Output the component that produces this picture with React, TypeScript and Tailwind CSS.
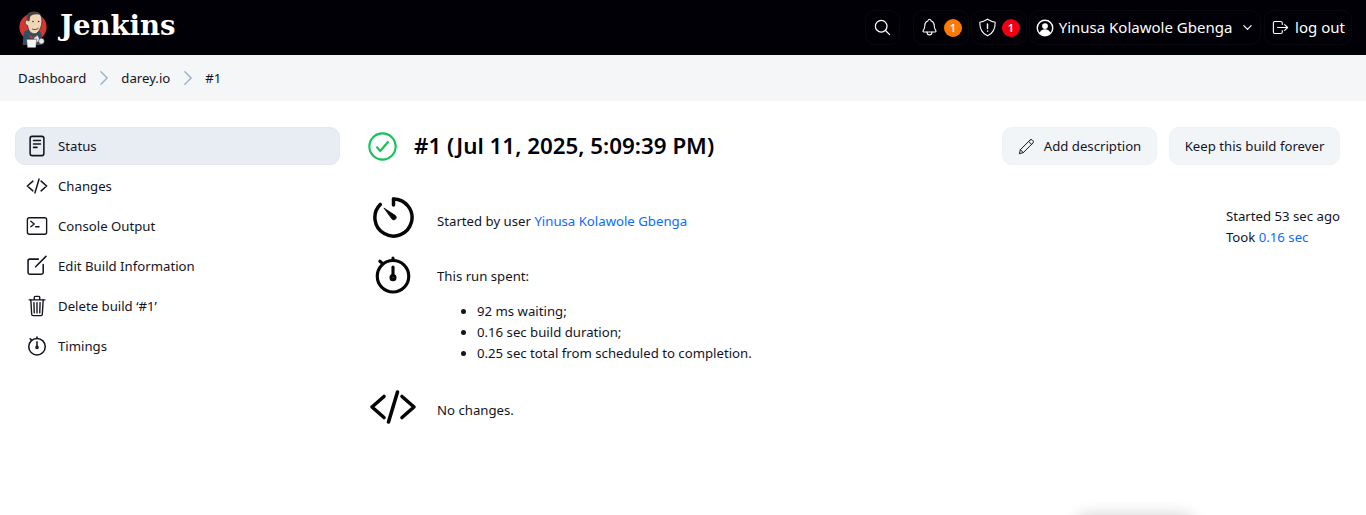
import type { ReactNode } from "react";

const sans = "font-['Noto_Sans','Open_Sans',sans-serif]";

function Icon({ className, children, strokeWidth = 32 }: { className: string; children: ReactNode; strokeWidth?: number }) {
  return (
    <svg viewBox="0 0 512 512" fill="none" stroke="currentColor" strokeWidth={strokeWidth} strokeLinecap="round" strokeLinejoin="round" className={className}>
      {children}
    </svg>
  );
}

const DocIcon = ({ className }: { className: string }) => (
  <Icon className={className} strokeWidth={36}>
    <rect x="96" y="32" width="320" height="448" rx="48" />
    <path d="M176 128h160M176 208h160M176 288h80" />
  </Icon>
);
const CodeIcon = ({ className, strokeWidth = 36 }: { className: string; strokeWidth?: number }) => (
  <Icon className={className} strokeWidth={strokeWidth}>
    <path d="M160 368L32 256l128-112M352 368l128-112-128-112M304 96l-96 320" />
  </Icon>
);
const TerminalIcon = ({ className }: { className: string }) => (
  <Icon className={className} strokeWidth={32}>
    <rect x="32" y="64" width="448" height="384" rx="48" />
    <path d="M112 144l80 64-80 64M224 272h80" />
  </Icon>
);
const EditIcon = ({ className }: { className: string }) => (
  <Icon className={className} strokeWidth={36}>
    <path d="M400 224v184a40 40 0 01-40 40H88a40 40 0 01-40-40V136a40 40 0 0140-40h199" />
    <path d="M224 272L464 32" />
  </Icon>
);
const TrashIcon = ({ className }: { className: string }) => (
  <Icon className={className} strokeWidth={32}>
    <path d="M112 112l20 336c1 18 15 32 32 32h184c18 0 31-14 32-32l20-336" />
    <path d="M72 112h368M192 112V56h0a24 24 0 0124-24h80a24 24 0 0124 24h0v56M256 176v240M184 176l8 240M328 176l-8 240" />
  </Icon>
);
const StopwatchIcon = ({ className, strokeWidth = 36 }: { className: string; strokeWidth?: number }) => (
  <Icon className={className} strokeWidth={strokeWidth}>
    <circle cx="256" cy="272" r="192" />
    <path d="M256 160v96" />
    <circle cx="256" cy="288" r="24" />
    <path d="M256 48v32M96 88l28 24" />
  </Icon>
);
const ClockIcon = ({ className }: { className: string }) => (
  <svg viewBox="44 44 424 424" fill="none" stroke="currentColor" strokeWidth={36} strokeLinecap="round" strokeLinejoin="round" className={className}>
    <path d="M256 64a192 192 0 11-137 57" />
    <path d="M256 64v64" />
    <path d="M160 160l116 76a24 24 0 01-34 38z" fill="currentColor" strokeWidth={8} />
  </svg>
);

function JenkinsLogo() {
  return (
    <svg viewBox="0 0 32 42" className="h-[40px] w-[30px]">
      <circle cx="16" cy="20" r="14.500" fill="#d33833" />
      <path d="M6 26c3-5 17-5 19 1l1 12H5z" fill="#335061" />
      <path d="M12 28l4 3 5-3-1 4h-7z" fill="#d33833" />
      <path d="M17 32l4-3 2 5-4 3z" fill="#e6e6e6" />
      <path d="M10 7c2-4 11-5 14 0 2 3 2 10 0 14-2 4-4 7-8 6-4-1-5-5-6-9-2 0-3-2-2-4 0-1 1-2 2-1z" fill="#f0d6b7" stroke="#231f20" strokeWidth="0.7" />
      <path d="M10 7c2-4 11-5 14 0-3-1-9-1-11 2l-1 5-2-1z" fill="#49423c" />
      <path d="M15 22c2 1 5 1 7-1" fill="none" stroke="#231f20" strokeWidth="0.8" />
      <circle cx="16" cy="14" r="0.8" fill="#231f20" />
      <circle cx="22" cy="14" r="0.8" fill="#231f20" />
      <path d="M9 33h11l-1 9H10z" fill="#f4f4f4" stroke="#231f20" strokeWidth="0.5" />
      <circle cx="25" cy="35" r="3" fill="#e8e8e8" stroke="#231f20" strokeWidth="0.5" />
    </svg>
  );
}

const navItems = [
  { label: "Status", icon: DocIcon, active: true },
  { label: "Changes", icon: CodeIcon },
  { label: "Console Output", icon: TerminalIcon },
  { label: "Edit Build Information", icon: EditIcon },
  { label: "Delete build ‘#1’", icon: TrashIcon },
  { label: "Timings", icon: StopwatchIcon },
];

const headerBtn = "flex h-[35px] items-center rounded-[10px] border border-white/[0.03]";

const Chevron = () => (
  <svg viewBox="0 0 512 512" fill="none" stroke="#9bb0cc" strokeWidth={36} strokeLinecap="round" strokeLinejoin="round" className="mx-[7.5px] h-[20px] w-[20px]">
    <path d="M176 96l160 160-160 160" />
  </svg>
);

export default function App() {
  return (
    <div className={`relative h-[515px] w-[1366px] overflow-hidden bg-white text-[13.2px] leading-[21px] text-[#14141f] ${sans}`}>
      {/* Header */}
      <header className="flex h-[55px] items-center justify-between bg-[#000006] pl-[18px] pr-[14px] text-white">
        <div className="flex items-center gap-[12px]">
          <JenkinsLogo />
          <span className="mb-[3px] font-['DejaVu_Serif',serif] text-[27.500px] font-bold leading-none">Jenkins</span>
        </div>
        <div className="flex items-center gap-[2px] text-[15px]">
          <div className={`${headerBtn} mr-[11px] w-[35px] justify-center`}>
            <svg viewBox="0 0 512 512" fill="none" stroke="currentColor" strokeWidth={34} strokeLinecap="round" className="h-[19px] w-[19px]">
              <path d="M221 64a157 157 0 10157 157A157 157 0 00221 64z" />
              <path d="M338 338l110 110" />
            </svg>
          </div>
          <div className={`${headerBtn} w-[56px] justify-center gap-[5px]`}>
            <Icon className="h-[19px] w-[19px]" strokeWidth={30}>
              <path d="M427 342c-26-32-44-48-44-137 0-81-42-110-76-124-5-2-9-6-10-11-6-21-23-38-41-38s-36 17-41 38c-2 5-6 9-10 11-35 14-76 43-76 124 0 89-18 105-44 137-11 13-1 34 18 34h306c19 0 29-21 18-34z" />
              <path d="M320 376v16a64 64 0 01-128 0v-16" />
            </Icon>
            <span className="flex h-[18px] w-[18px] items-center justify-center rounded-full bg-[#fe7a04] text-[11px] font-semibold">1</span>
          </div>
          <div className={`${headerBtn} w-[56px] justify-center gap-[5px]`}>
            <Icon className="h-[19px] w-[19px]" strokeWidth={30}>
              <path d="M463 113c-60-8-140-40-207-81-67 41-147 73-207 81-4 176 56 300 207 367 151-67 211-191 207-367z" />
              <path d="M256 160v120" strokeWidth={40} />
              <circle cx="256" cy="352" r="10" fill="currentColor" strokeWidth={16} />
            </Icon>
            <span className="flex h-[18px] w-[18px] items-center justify-center rounded-full bg-[#f00011] text-[11px] font-semibold">1</span>
          </div>
          <div className={`${headerBtn} w-[232px] justify-center gap-[5px]`}>
            <svg viewBox="0 0 20 20" className="h-[18px] w-[18px]">
              <circle cx="10" cy="10" r="8.6" fill="none" stroke="currentColor" strokeWidth="1.6" />
              <circle cx="10" cy="7.8" r="3.2" fill="currentColor" />
              <path d="M4 15.2c1.5-3 3.5-3.8 6-3.8s4.500.8 6 3.800c-1.500 1.900-3.700 3-6 3s-4.500-1.100-6-3z" fill="currentColor" />
            </svg>
            <span>Yinusa Kolawole Gbenga</span>
            <svg viewBox="0 0 512 512" fill="none" stroke="currentColor" strokeWidth={48} strokeLinecap="round" strokeLinejoin="round" className="ml-[4px] h-[13px] w-[13px]">
              <path d="M112 184l144 144 144-144" />
            </svg>
          </div>
          <div className={`${headerBtn} ml-[1px] w-[88px] justify-center gap-[5px]`}>
            <Icon className="h-[19px] w-[19px]" strokeWidth={30}>
              <path d="M304 336v40a40 40 0 01-40 40H104a40 40 0 01-40-40V136a40 40 0 0140-40h152c22 0 48 18 48 40v40" />
              <path d="M368 336l80-80-80-80M176 256h272" />
            </Icon>
            <span>log out</span>
          </div>
        </div>
      </header>

      {/* Breadcrumbs */}
      <nav className="flex h-[46px] items-center bg-[#f5f6f8] pl-[18px]">
        <span>Dashboard</span>
        <Chevron />
        <span>darey.io</span>
        <Chevron />
        <span>#1</span>
      </nav>

      <div className="flex pl-[15px] pr-[26px] pt-[26px]">
        {/* Sidebar */}
        <aside className="flex w-[325px] shrink-0 flex-col gap-[2px]">
          {navItems.map((item) => (
            <div
              key={item.label}
              className={`flex h-[38px] items-center gap-[10px] rounded-[10px] border pl-[10px] ${item.active ? "border-[#e2e7f0] bg-[#e8ecf3]" : "border-transparent"}`}
            >
              <item.icon className="h-[22px] w-[22px] shrink-0" />
              <span>{item.label}</span>
            </div>
          ))}
        </aside>

        {/* Main */}
        <main className="ml-[28px] min-w-0 flex-1">
          <div className="flex h-[38px] items-center justify-between">
            <div className="flex items-center gap-[17px]">
              <svg viewBox="0 0 512 512" fill="none" stroke="#12c45a" strokeWidth={38} strokeLinecap="round" strokeLinejoin="round" className="h-[29px] w-[29px]">
                <circle cx="256" cy="256" r="232" />
                <path d="M352 176L217 336l-57-64" />
              </svg>
              <h1 className="text-[22.350px] font-semibold leading-none text-[#000008]">#1 (Jul 11, 2025, 5:09:39 PM)</h1>
            </div>
            <div className="flex gap-[12px]">
              <button className="flex h-[38px] w-[155px] items-center justify-center gap-[9px] rounded-[10px] border border-[#eef1f5] bg-[#f2f5f8]">
                <svg viewBox="0 0 512 512" fill="none" stroke="currentColor" strokeWidth={30} strokeLinecap="round" strokeLinejoin="round" className="h-[17px] w-[17px]">
                  <path d="M364 60L72 352l-32 120 120-32 292-292a45 45 0 000-64l-24-24a45 45 0 00-64 0zM72 352l88 88M320 104l88 88" />
                </svg>
                Add description
              </button>
              <button className="flex h-[38px] w-[171px] items-center justify-center rounded-[10px] border border-[#eef1f5] bg-[#f2f5f8]">
                Keep this build forever
              </button>
            </div>
          </div>

          <div className="mt-[30px] flex justify-between">
            <div>
              <div className="flex h-[44px] items-center">
                <div className="flex w-[69px] shrink-0 justify-center pl-[1px] pr-[19px]">
                  <ClockIcon className="h-[41px] w-[41px] shrink-0 text-[#060608]" />
                </div>
                <p className="pt-[8px]">
                  Started by user <a className="text-[#0b6aff]">Yinusa Kolawole Gbenga</a>
                </p>
              </div>
              <div className="mt-[13px] flex">
                <div className="flex h-[44px] w-[69px] shrink-0 justify-center pr-[19px] pt-[2px]">
                  <StopwatchIcon className="h-[42px] w-[42px] text-[#060608]" strokeWidth={38} />
                </div>
                <div className="pt-[14px]">
                  <p>This run spent:</p>
                  <ul className="mt-[14px] list-disc pl-[40px]">
                    <li>92 ms waiting;</li>
                    <li>0.16 sec build duration;</li>
                    <li>0.25 sec total from scheduled to completion.</li>
                  </ul>
                </div>
              </div>
              <div className="mt-[19px] flex items-center">
                <div className="flex w-[69px] shrink-0 justify-center pb-[6px] pr-[19px]">
                  <CodeIcon className="h-[48px] w-[48px] text-[#060608]" strokeWidth={38} />
                </div>
                <p>No changes.</p>
              </div>
            </div>
            <div className="pt-[11px]">
              <p>Started 53 sec ago</p>
              <p>
                Took <a className="text-[#0b6aff]">0.16 sec</a>
              </p>
            </div>
          </div>
        </main>
      </div>

      {/* shadow of the floating element cut off under the window edge */}
      <div className="absolute left-[1076px] top-[515px] h-[20px] w-[118px] rounded-[10px] shadow-[0_0_16px_rgba(0,0,0,0.18)]" />
    </div>
  );
}
